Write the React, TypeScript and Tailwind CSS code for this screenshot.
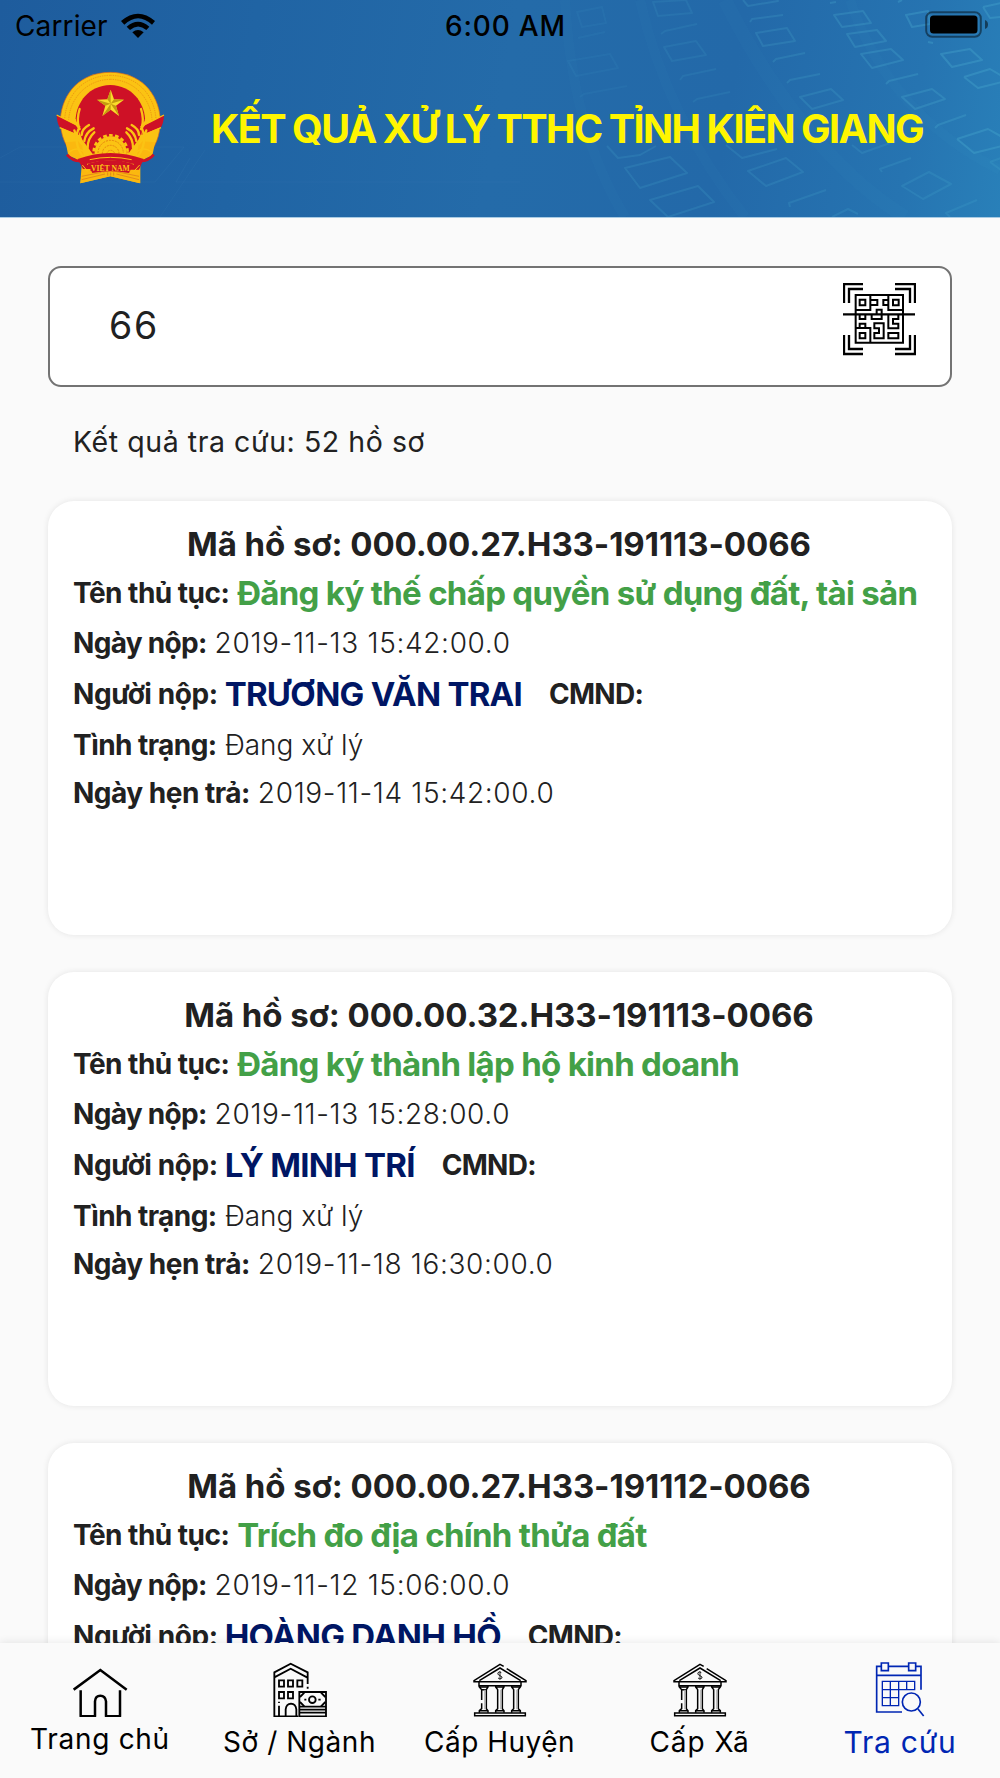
import type { ReactNode } from "react";

type Record = {
  code: string;
  procedure: string;
  submitted: string;
  applicant: string;
  status?: string;
  due?: string;
};

const records: Record[] = [
  {
    code: "000.00.27.H33-191113-0066",
    procedure: "Đăng ký thế chấp quyền sử dụng đất, tài sản",
    submitted: "2019-11-13 15:42:00.0",
    applicant: "TRƯƠNG VĂN TRAI",
    status: "Đang xử lý",
    due: "2019-11-14 15:42:00.0",
  },
  {
    code: "000.00.32.H33-191113-0066",
    procedure: "Đăng ký thành lập hộ kinh doanh",
    submitted: "2019-11-13 15:28:00.0",
    applicant: "LÝ MINH TRÍ",
    status: "Đang xử lý",
    due: "2019-11-18 16:30:00.0",
  },
  {
    code: "000.00.27.H33-191112-0066",
    procedure: "Trích đo địa chính thửa đất",
    submitted: "2019-11-12 15:06:00.0",
    applicant: "HOÀNG DANH HỒ",
  },
];

function HeaderPattern() {
  return (
    <svg className="absolute inset-0" width="1000" height="217" viewBox="0 0 1000 217" fill="none">
      <g stroke="#5cc0dc" strokeOpacity="0.03" strokeWidth="10">
        <path d="M565 0C570 90 590 160 625 217" />
        <path d="M640 0C660 90 700 160 745 217" />
        <path d="M725 0C770 90 830 170 905 217" strokeWidth="14" />
        <path d="M850 0C880 90 940 140 1000 170" />
      </g>
      <path d="M0 158L20 147H184L155 182H0M205 150L160 217M190 158L176 182H520" stroke="#4b8fc4" strokeOpacity="0.1" />
      {/* binary digits drifting to the right edge */}
      <g stroke="#4fb3d3" strokeWidth="2" strokeLinejoin="round">
        <path strokeOpacity="0.08" d="M577 12L602 7L606 23L582 27ZM568 61L610 54L618 68L576 76ZM580 97L584 94L627 86M578 38L605 32" />
        <path strokeOpacity="0.13" d="M653 2L686 0L692 13L658 16ZM664 47L696 41L706 55L672 61ZM661 34L665 31L697 24M680 80L683 76L716 69M693 102L697 99L730 92" />
        <path strokeOpacity="0.2" d="M743 0L748 6L778 1L775 -4M756 33L787 28L795 41L763 46ZM750 22L752 19L783 15M773 62L776 59L805 53M787 83L790 80L820 74M800 97L831 89L843 100L812 109Z" />
        <path strokeOpacity="0.25" d="M834 15L863 11L871 23L842 27ZM847 34L877 30L886 41L855 47ZM861 54L891 49L903 60L872 68ZM886 84L889 81L918 74M902 97L932 89L945 99L915 109ZM935 128L938 125L966 115M830 3L836 2" />
        <path strokeOpacity="0.3" d="M898 2L902 0M906 15L928 11L930 24L912 27ZM941 54L970 49L982 60L952 67ZM964 77L990 69L1002 76M964 77L978 88L1002 82M957 139L988 129L1004 138M957 139L974 153L1002 146M928 42L933 43M983 7L1001 3M983 7L990 18L1001 17" />
        <path strokeOpacity="0.18" d="M607 146L618 158L640 155L656 146M625 168L670 157L687 173L640 188ZM650 200L698 186L714 202L668 217ZM726 145L742 158L777 149M748 171L786 158L803 172L766 186ZM790 207L789 203L826 190M852 145L862 153L890 143M882 172L880 169L911 158M902 186L929 172L951 184L923 199ZM950 217L946 213L977 200M990 162L1001 158M990 162L1001 170M832 217L848 209L858 214" />
      </g>
    </svg>
  );
}

function Wifi() {
  return (
    <svg width="34" height="25" viewBox="362 34 102 75">
      <path d="M362 58Q413 14 464 58L455 69Q413 30 372 69Z" />
      <path d="M379 75Q413 46 447 75L438 85Q413 64 389 85Z" />
      <path d="M396 92Q413 78 430 92L413 109Z" />
    </svg>
  );
}

function Battery() {
  return (
    <svg width="64" height="27" viewBox="0 0 64 27">
      <rect x="1.2" y="1.2" width="54.6" height="24.6" rx="6" fill="none" stroke="#000" strokeOpacity="0.45" strokeWidth="2" />
      <rect x="5" y="4.5" width="47.5" height="18" rx="3.5" />
      <path d="M60 9Q63 10 63 13.5T60 18Z" fillOpacity="0.5" />
    </svg>
  );
}

function Emblem() {
  return (
    <svg width="110" height="114" viewBox="35 34 330 342">
      {/* wheat wreath */}
      <path d="M112 316L180 300L288 316V371L198 350L108 371Z" fill="#fbb80f" />
      <path d="M198 38C110 38 54 98 48 178C48 228 62 262 102 306H296C336 262 348 228 348 178C342 98 286 38 198 38Z" fill="#fbc313" stroke="#d8631c" strokeWidth="2" />
      <path d="M198 47C118 48 66 105 61 178M198 59C130 60 78 112 73 180M198 47C278 48 330 105 335 178M198 59C266 60 318 112 323 180" fill="none" stroke="#ee9a12" strokeWidth="3" strokeDasharray="4 3" />
      <path d="M198 76C132 78 98 128 94 176Q100 210 114 240L150 290H246L282 240Q298 210 302 176C298 128 264 78 198 76Z" fill="#ce1126" />
      {/* ribbon sides */}
      <path d="M37 166L106 202L104 226L46 203Q38 190 37 166Z" fill="#ce1126" />
      <path d="M359 166L290 202L292 226L350 203Q358 190 359 166Z" fill="#ce1126" />
      <path d="M37 166Q72 184 108 202M46 204L108 230M359 166Q324 184 288 202M350 204L288 230" fill="none" stroke="#fbc313" strokeWidth="4" />
      <path d="M64 248L112 244L120 306L72 288ZM332 248L284 244L276 306L324 288Z" fill="#fbb80f" />
      <path d="M68 285Q88 310 124 302M328 285Q308 310 272 302" fill="none" stroke="#ce1126" strokeWidth="8" />
      {/* rice ears */}
      <g fill="none" stroke="#fbc313" strokeWidth="7" strokeLinecap="round">
        <path d="M118 294Q84 248 104 204Q96 180 106 148M106 208L90 184M112 226Q112 208 134 196M120 244Q124 218 148 206M112 252Q94 230 90 212M130 264Q130 236 150 218" />
        <path d="M278 294Q312 248 292 204Q300 180 290 148M290 208L306 184M284 226Q284 208 262 196M276 244Q272 218 248 206M284 252Q302 230 306 212M266 264Q266 236 246 218" />
        <path d="M76 276Q98 260 118 276T142 298M320 276Q298 260 278 276T254 298" strokeWidth="5" />
      </g>
      {/* cog wheel */}
      <circle cx="199" cy="278" r="48" fill="#fbc313" />
      <circle cx="199" cy="278" r="51" fill="none" stroke="#fbc313" strokeWidth="8" strokeDasharray="11 7" />
      <path d="M161 280A38 38 0 0 1 237 280M174 282A25 25 0 0 1 224 282M187 284A12 12 0 0 1 211 284" fill="none" stroke="#e8860f" strokeWidth="3" strokeDasharray="6 3" />
      {/* banner */}
      <path d="M100 298Q198 262 298 298L284 330H256L262 340Q198 326 136 342L140 328H116Z" fill="#ce1126" />
      <path d="M136 300Q198 286 262 300M128 314Q198 294 268 314" fill="none" stroke="#fbc313" strokeWidth="3" />
      <path d="M114 316L136 342Q198 328 262 342L286 316" fill="none" stroke="#fbc313" strokeWidth="3" />
      <path d="M112 340Q198 318 286 340V371L198 350L108 371Z" fill="#fbb80f" />
      <path d="M130 312Q198 292 266 312L254 340Q198 330 144 340Z" fill="#ce1126" />
      <path d="M112 350L182 336M112 360L182 343M284 350L216 336M284 360L216 343M190 338V348M199 338V348M208 338V348" stroke="#d8741c" strokeWidth="2" />
      <text x="198" y="334" textAnchor="middle" fontSize="23" fontWeight="700" textLength="116" lengthAdjust="spacingAndGlyphs" fill="#fbc313" className="font-['Liberation_Serif',serif]">
        VIỆT NAM
      </text>
      {/* star */}
      <path d="M199 90L209 119L239 120L215 138L224 169L199 150L174 169L183 138L158 120L189 119Z" fill="#f9dc2b" />
      <path d="M199 90V132L189 119ZM158 120L199 132L183 138ZM174 169L199 132V150ZM224 169L199 132L215 138ZM239 120L199 132L209 119Z" fill="#c39a10" />
    </svg>
  );
}

function QrScan() {
  return (
    <svg width="73" height="73" viewBox="69 69 219 219" fill="none" stroke="#000" strokeWidth="7">
      <path d="M72 129V72H129M87 129V87H129M225 72H285V129M225 87H270V129M72 225V282H129M87 225V267H129M225 282H285V225M225 267H270V225" />
      <path d="M69 163H285" />
      <g strokeWidth="6">
        <path d="M107 105H249V248H107Z" />
        <path d="M151 105V150H107M205 105V150H249M107 204H151V248" />
        <path d="M119 119H136V136H119ZM219 119H236V136H219ZM119 219H136V235H119Z" />
        <path d="M151 120H172V135H151M205 120H190V135H205M170 163V149H185V163M155 163V177H185V163" />
        <path d="M119 163V177H136V163M119 204V191H136V204" />
        <path d="M163 190H191V235H163V219H177V205H163ZM205 163V205H235V191H219V177H235V163M205 219H235V235H205Z" />
      </g>
    </svg>
  );
}

function HomeIcon() {
  return (
    <svg width="55" height="55" viewBox="218 94 165 165" fill="none" stroke="currentColor" strokeWidth="7.5">
      <path d="M220 177L300 118L379 177" />
      <path d="M241 179V257H284V212Q285 195 300 195T317 212V257H359V179" strokeLinejoin="round" />
    </svg>
  );
}

function OfficeIcon() {
  return (
    <svg width="55" height="55" viewBox="820 98 165 165" fill="none" stroke="currentColor" strokeWidth="5.5">
      <path d="M896 261H824V129L873 103L924 129V164M824 144L873 118L922 144M924 172V178" />
      <path d="M838 153H853V172H838ZM865 153H880V172H865ZM893 153H908V172H893ZM838 188H853V207H838ZM865 188H880V207H865Z" />
      <path d="M838 217V221M838 229V261M858 261V240Q860 224 874 223Q888 224 890 240V261" />
      <path d="M899 188H979V261H899ZM899 232H979M899 241H979M899 250H979" />
      <circle cx="938" cy="211" r="10" />
      <path d="M914 211H920M956 211H963M901 203L914 190M977 203L964 190M901 218L914 231M977 218L964 231" />
    </svg>
  );
}

function BankIcon() {
  return (
    <svg width="55" height="55" viewBox="39 36 165 165" fill="none" stroke="currentColor" strokeWidth="4.5">
      <path d="M131 49L120 43L42 92V95H198V92L140 56M58 92L120 54L182 92" />
      <path d="M57 96V107H183V96" />
      <path d="M124 68Q118 63 114 68T120 77T125 85Q119 89 114 84M120 64V89" strokeWidth="2.5" />
      <path d="M58 107V111L65 119V150M65 160V176L58 182V188M84 107V111L79 119V176L84 182V188M60 111H82M60 182H82M66 119H79" />
      <path d="M107 107V111L113 119V176L107 182V188M132 107V111L127 119V176L132 182V188M108 111H131M108 182H131" />
      <path d="M155 107V111L161 119V176L155 182V188M181 107V111L175 119V176L181 182V188M156 111H180M156 182H180" />
      <path d="M44 189H196V197H44Z" />
      <path d="M75 119V178M123 119V178M171 119V178" stroke="#aaa" />
    </svg>
  );
}

function SearchCalendarIcon() {
  return (
    <svg width="55" height="55" viewBox="219 65 165 165" fill="none" stroke="currentColor" strokeWidth="5">
      <path d="M244 78H230V215H306M266 78H326M347 78H363V148M230 105H363" />
      <path d="M244 68H265V91H244ZM326 68H347V91H326Z" />
      <path d="M247 123H344V148H247ZM247 148V196H296V123M271 123V196M320 123V148M247 172H296" strokeWidth="4" />
      <circle cx="334" cy="185" r="27" />
      <path d="M354 206L371 227" />
    </svg>
  );
}

function Row({ label, tracking, height = "h-[51px]", children }: { label: string; tracking: string; height?: string; children: ReactNode }) {
  return (
    <div className={`flex items-center gap-2 whitespace-nowrap ${height}`}>
      <span className={`text-[28px] font-[650] ${tracking}`}>{label}</span>
      {children}
    </div>
  );
}

function RecordCard({ record }: { record: Record }) {
  return (
    <article className="h-[434px] shrink-0 rounded-[26px] bg-white px-[25px] pt-[21px] shadow-[0_0_6px_rgba(0,0,0,0.09)]">
      <h2 className="flex h-[45px] items-center justify-center pr-[2px] text-[33px] font-[650] tracking-[-0.07px] whitespace-nowrap">
        Mã hồ sơ: {record.code}
      </h2>
      <Row label="Tên thủ tục:" tracking="tracking-[-0.53px]">
        <span className="pt-[2px] text-[33px] font-[650] tracking-[-0.71px] text-[#43a047]">{record.procedure}</span>
      </Row>
      <Row label="Ngày nộp:" tracking="tracking-[-0.7px]" height="h-[50px]">
        <span className="text-[28px] font-light tracking-[0.66px]">{record.submitted}</span>
      </Row>
      <Row label="Người nộp:" tracking="tracking-[-0.43px]">
        <span className="-ml-px pt-[2px] text-[33px] font-[650] tracking-[-0.74px] text-[#001664]">{record.applicant}</span>
        <span className="ml-[19px] text-[28px] font-[650] tracking-[-0.75px]">CMND:</span>
      </Row>
      {record.status && (
        <Row label="Tình trạng:" tracking="tracking-[-0.56px]">
          <span className="text-[28px] font-light tracking-[-0.03px]">{record.status}</span>
        </Row>
      )}
      {record.due && (
        <Row label="Ngày hẹn trả:" tracking="tracking-[-0.5px]" height="h-[45px]">
          <span className="text-[28px] font-light tracking-[0.65px]">{record.due}</span>
        </Row>
      )}
    </article>
  );
}

const tabs = [
  { label: "Trang chủ", icon: <HomeIcon />, style: "pb-[6px] text-[28px] tracking-[0.7px]" },
  { label: "Sở / Ngành", icon: <OfficeIcon />, style: "pr-px text-[28px] tracking-[0.55px]" },
  { label: "Cấp Huyện", icon: <BankIcon />, style: "pr-px text-[28px] tracking-[0.49px]" },
  { label: "Cấp Xã", icon: <BankIcon />, style: "pr-px text-[28px] tracking-[0.96px]" },
  { label: "Tra cứu", icon: <SearchCalendarIcon />, style: "text-[30px] tracking-[0.75px]", active: true },
];

export default function App() {
  return (
    <div className="flex h-[1778px] w-[1000px] flex-col overflow-hidden bg-[#fafafa] font-['Inter',sans-serif] text-[#212121]">
      <header className="relative h-[218px] shrink-0 border-b border-[#a9cbe3] bg-[linear-gradient(100deg,#1e5c9d_0%,#2064a4_25%,#246ba9_50%,#2369a9_72%,#2674b1_90%,#2980b9_100%)]">
        <HeaderPattern />
        <div className="relative grid h-[51px] grid-cols-3 items-center text-[28px] text-black">
          <div className="flex items-center gap-[13px] pl-[15px]">
            <span className="tracking-[0.13px]">Carrier</span>
            <Wifi />
          </div>
          <span className="pl-[11px] text-center font-[550] tracking-[0.8px]">6:00 AM</span>
          <div className="flex justify-end pr-[11px] pb-[2px]">
            <Battery />
          </div>
        </div>
        <div className="relative flex h-[154px] items-center pl-[56px]">
          <Emblem />
          <h1 className="ml-[45px] pt-[3px] text-[39.5px] font-bold tracking-[-1.55px] whitespace-nowrap text-[#fff500] [word-spacing:-0.8px]">
            KẾT QUẢ XỬ LÝ TTHC TỈNH KIÊN GIANG
          </h1>
        </div>
      </header>

      <main className="flex min-h-0 flex-1 flex-col overflow-hidden px-12 pt-12">
        <div className="flex h-[121px] shrink-0 items-start justify-between rounded-[13px] border-[2.5px] border-[#737373] bg-white pt-[15px] pr-[34px] pl-[59px]">
          <input
            className="mt-[10px] h-[64px] w-[500px] bg-transparent text-[37.5px] tracking-[1.75px] outline-none"
            defaultValue="66"
          />
          <QrScan />
        </div>
        <p className="mt-[33px] flex h-[45px] shrink-0 items-center pl-[25px] text-[28.5px] tracking-[0.56px]">
          Kết quả tra cứu: 52 hồ sơ
        </p>
        <div className="mt-[36px] flex flex-col gap-[37px]">
          {records.map(r => (
            <RecordCard key={r.code} record={r} />
          ))}
        </div>
      </main>

      <nav className="relative grid h-[135px] shrink-0 grid-cols-5 bg-[#fafafa] pt-[19px] text-black shadow-[0_-1px_8px_rgba(0,0,0,0.09)]">
        {tabs.map(t => (
          <button key={t.label} type="button" className={`flex flex-col items-center ${t.active ? "text-[#0026b3]" : ""}`}>
            {t.icon}
            <span className="mt-2 flex h-[34px] items-center whitespace-nowrap">
              <span className={t.style}>{t.label}</span>
            </span>
          </button>
        ))}
      </nav>
    </div>
  );
}
